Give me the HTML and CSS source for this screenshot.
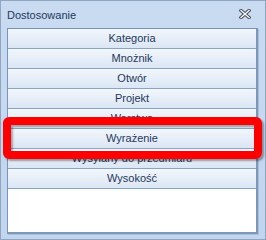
FILE: index.html
```html
<!DOCTYPE html>
<html>
<head>
<meta charset="utf-8">
<link rel="stylesheet" href="styles.css">
</head>
<body>
<div class="window">
  <div class="titlebar">
    <span class="title">Dostosowanie</span>
    <svg class="close" width="12" height="10" viewBox="0 0 12 10">
      <path d="M2 1.5 L10 8.5 M10 1.5 L2 8.5" stroke="#4a4f57" stroke-width="3.4" stroke-linecap="square" fill="none"/>
      <path d="M2 1.5 L10 8.5 M10 1.5 L2 8.5" stroke="#f4f6f9" stroke-width="1.4" stroke-linecap="square" fill="none"/>
    </svg>
  </div>
  <div class="panel">
    <div class="row">Kategoria</div>
    <div class="row">Mnożnik</div>
    <div class="row">Otwór</div>
    <div class="row">Projekt</div>
    <div class="row">Warstwa</div>
    <div class="row">Wyrażenie</div>
    <div class="row">Wysyłany do przedmiaru</div>
    <div class="row">Wysokość</div>
  </div>
  <div class="highlight"></div>
</div>
</body>
</html>
```

FILE: styles.css
```css
html, body {
  margin: 0;
  padding: 0;
  background: #c4d7ef;
}
.window {
  position: relative;
  width: 266px;
  height: 240px;
  box-sizing: border-box;
  border: 1px solid #8fa5c2;
  background: linear-gradient(#c9dbf1, #c2d5ee);
  font-family: "Liberation Sans", Arial, sans-serif;
  font-size: 11px;
  color: #1e395b;
  display: flex;
  flex-direction: column;
}
.titlebar {
  height: 26px;
  display: flex;
  align-items: center;
  justify-content: space-between;
  padding: 2px 14px 0 6px;
  box-sizing: border-box;
}
.close {
  display: block;
  margin-top: -2px;
}
.panel {
  margin: 1px 7px 0 6px;
  height: 206px;
  box-sizing: border-box;
  background: #ffffff;
  border-left: 1px solid #7894b8;
  border-top: 1px solid #7894b8;
  border-right: 2px solid #7d97b9;
  border-bottom: 2px solid #7d97b9;
  box-shadow: 1px 1px 0 #a9bfdb;
}
.row {
  height: 19px;
  border-bottom: 1px solid #8aa4c6;
  background: linear-gradient(#f2f6fc, #dbe6f4);
  display: flex;
  align-items: center;
  justify-content: center;
  line-height: 1;
}
.highlight {
  position: absolute;
  left: 2px;
  top: 116px;
  width: 259px;
  height: 42px;
  box-sizing: border-box;
  border: 8px solid #ff0000;
  border-radius: 6px;
  box-shadow: 2px 2px 2px rgba(0,0,0,0.35), inset 2px 2px 2px rgba(0,0,0,0.3);
}
```
